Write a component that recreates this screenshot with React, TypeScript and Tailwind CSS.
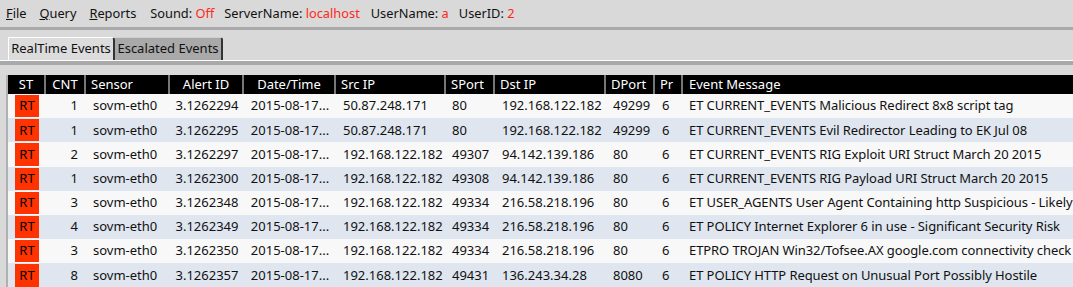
import React from 'react';

type Row = {
  cnt: number;
  alertId: string;
  src: string;
  sport: string;
  dst: string;
  dport: string;
  msg: string;
};

const rows: Row[] = [
  { cnt: 1, alertId: '3.1262294', src: '50.87.248.171', sport: '80', dst: '192.168.122.182', dport: '49299', msg: 'ET CURRENT_EVENTS Malicious Redirect 8x8 script tag' },
  { cnt: 1, alertId: '3.1262295', src: '50.87.248.171', sport: '80', dst: '192.168.122.182', dport: '49299', msg: 'ET CURRENT_EVENTS Evil Redirector Leading to EK Jul 08' },
  { cnt: 2, alertId: '3.1262297', src: '192.168.122.182', sport: '49307', dst: '94.142.139.186', dport: '80', msg: 'ET CURRENT_EVENTS RIG Exploit URI Struct March 20 2015' },
  { cnt: 1, alertId: '3.1262300', src: '192.168.122.182', sport: '49308', dst: '94.142.139.186', dport: '80', msg: 'ET CURRENT_EVENTS RIG Payload URI Struct March 20 2015' },
  { cnt: 3, alertId: '3.1262348', src: '192.168.122.182', sport: '49334', dst: '216.58.218.196', dport: '80', msg: 'ET USER_AGENTS User Agent Containing http Suspicious - Likely S' },
  { cnt: 4, alertId: '3.1262349', src: '192.168.122.182', sport: '49334', dst: '216.58.218.196', dport: '80', msg: 'ET POLICY Internet Explorer 6 in use - Significant Security Risk' },
  { cnt: 3, alertId: '3.1262350', src: '192.168.122.182', sport: '49334', dst: '216.58.218.196', dport: '80', msg: 'ETPRO TROJAN Win32/Tofsee.AX google.com connectivity check' },
  { cnt: 8, alertId: '3.1262357', src: '192.168.122.182', sport: '49431', dst: '136.243.34.28', dport: '8080', msg: 'ET POLICY HTTP Request on Unusual Port Possibly Hostile' },
];

const cols = 'grid grid-cols-[38px_40px_84px_74px_92px_110px_49px_111px_49px_28px_1fr]';

const Menu = () => (
  <div className="h-[27px] flex items-center bg-[#d9d9d9] pl-[6px] text-[12.8px] text-[#111]">
    <span className="mr-[13px]"><u>F</u>ile</span>
    <span className="mr-[13px]"><u>Q</u>uery</span>
    <span className="mr-[14px]"><u>R</u>eports</span>
    <span className="mr-[10px]">Sound: <span className="text-[#ff2a1a]">Off</span></span>
    <span className="mr-[11px]">ServerName: <span className="text-[#ff2a1a]">localhost</span></span>
    <span className="mr-[10px]">UserName: <span className="text-[#ff2a1a]">a</span></span>
    <span>UserID: <span className="text-[#ff2a1a]">2</span></span>
  </div>
);

const Tabs = () => (
  <div className="bg-[#d9d9d9]">
    <div className="h-[3px] bg-[#a9a9a9]" />
    <div className="h-[30px] flex items-end pl-[8px]">
      <div className="h-[23px] w-[107px] flex items-center justify-center bg-[#dcdcdc] border-t border-l border-white border-r-2 border-r-[#333] rounded-tr-[3px] text-[13px] text-[#111]">
        RealTime Events
      </div>
      <div className="h-[23px] w-[108px] flex items-center justify-center bg-[#a9a9a9] border-t border-[#d0d0d0] border-r-2 border-r-[#333] rounded-tr-[3px] text-[13px] text-[#111]">
        Escalated Events
      </div>
    </div>
    <div className="h-px bg-white" />
    <div className="h-[4px] bg-[#a9a9a9]" />
  </div>
);

const Head = ({ children, align = 'left' }: { children: React.ReactNode; align?: 'left' | 'center' }) => (
  <div className={`h-full border-r-2 border-[#777] px-[5px] whitespace-nowrap ${align === 'center' ? 'text-center' : 'text-left'}`}>{children}</div>
);

export default function App() {
  return (
    <div className="w-[1073px] h-[287px] overflow-hidden bg-[#d9d9d9]" style={{ fontFamily: '"Noto Sans", "Open Sans", sans-serif' }}>
      <Menu />
      <Tabs />
      <div className="flex pt-[10px]">
        <div className="w-[6px] shrink-0" />
        <div className="flex-1 border-l-2 border-[#b0b0b0] min-w-0">
          <div className={`${cols} h-[19px] bg-black text-white text-[13px] leading-[19px]`}>
            <Head align="center">ST</Head>
            <Head align="center">CNT</Head>
            <Head>Sensor</Head>
            <Head align="center">Alert ID</Head>
            <Head align="center">Date/Time</Head>
            <Head>Src IP</Head>
            <Head>SPort</Head>
            <Head>Dst IP</Head>
            <Head>DPort</Head>
            <Head>Pr</Head>
            <div className="px-[6px] whitespace-nowrap">Event Message</div>
          </div>
          {rows.map((r, i) => (
            <div key={r.alertId} className={`${cols} h-[24.2px] items-center text-[13px] text-[#111] ${i % 2 ? 'bg-[#dfe6ef]' : 'bg-[#f8f8f8]'}`}>
              <div className="flex justify-center h-full py-px">
                <div className="w-[24px] h-full bg-[#ff3300] flex items-center justify-center text-black">RT</div>
              </div>
              <div className="text-right pr-[8px]">{r.cnt}</div>
              <div className="pl-[7px]">sovm-eth0</div>
              <div className="text-center">{r.alertId}</div>
              <div className="text-center">2015-08-17...</div>
              <div className="pl-[7px]">{r.src}</div>
              <div className="pl-[6px]">{r.sport}</div>
              <div className="pl-[7px]">{r.dst}</div>
              <div className="pl-[7px]">{r.dport}</div>
              <div className="pl-[7px]">6</div>
              <div className="pl-[6px] whitespace-nowrap overflow-hidden tracking-[-0.08px]">{r.msg}</div>
            </div>
          ))}
        </div>
      </div>
    </div>
  );
}
